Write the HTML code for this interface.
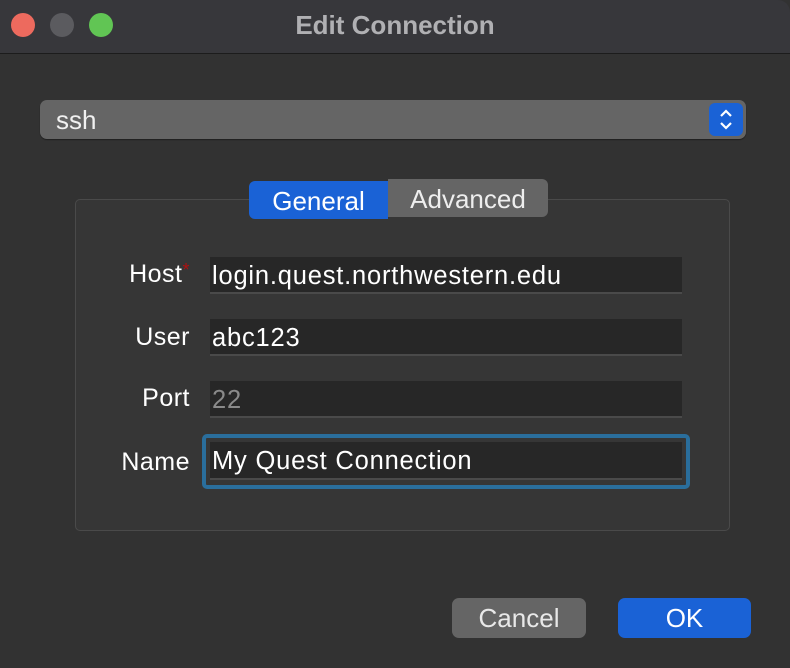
<!DOCTYPE html>
<html><head><style>
*{margin:0;padding:0;box-sizing:border-box}
body{width:790px;height:668px;background:#323232;font-family:"Liberation Sans",sans-serif;position:relative;overflow:hidden;color:#fff}
.a{position:absolute}
.tb{left:0;top:0;width:790px;height:54px;background:#37373b;border-bottom:1px solid #1c1c1c;border-top-right-radius:12px}
.dot{width:24px;height:24px;border-radius:50%;top:13px}
.title{left:0;width:790px;top:10px;text-align:center;font-size:26px;font-weight:bold;color:#b0b0b3}
.pop{left:40px;top:100px;width:706px;height:39px;background:#656565;border-radius:7px;box-shadow:0 1px 1px rgba(0,0,0,.4)}
.step{left:709px;top:103px;width:34px;height:33px;background:#1a62d6;border-radius:6px}
.grp{left:75px;top:199px;width:655px;height:332px;background:#363636;border:1px solid #4a4a4a;border-radius:5px}
.tab{top:181px;height:38px;font-size:26px;text-align:center;line-height:40px}
.lbl{width:190px;left:0;text-align:right;font-size:25px;color:#fff;letter-spacing:.5px}
.fld{left:210px;width:472px;height:37px;background:#272727;border-bottom:2px solid #4a4a4a;font-size:25.5px;letter-spacing:.8px;padding-left:2px;line-height:38px}
.btn{top:598px;height:40px;border-radius:7px;font-size:26px;text-align:center;line-height:40px}
</style></head><body>
<div class="a tb"></div>
<div class="a dot" style="left:11px;background:#ed6a5e"></div>
<div class="a dot" style="left:50px;background:#5b5b5f"></div>
<div class="a dot" style="left:89px;background:#61c554"></div>
<div class="a title">Edit Connection</div>
<div class="a pop"></div>
<div class="a" style="left:56px;top:105px;font-size:26px;color:#f0f0f0">ssh</div>
<div class="a step"><svg width="34" height="33"><path d="M12 13l5-5 5 5M12 20l5 5 5-5" stroke="#fff" stroke-width="2.2" fill="none"/></svg></div>
<div class="a grp"></div>
<div class="a tab" style="left:249px;width:139px;background:#1a62d6;border-radius:6px 0 0 6px;top:181px">General</div>
<div class="a tab" style="left:388px;width:160px;background:#656565;border-radius:0 6px 6px 0;top:179px;color:#eee">Advanced</div>
<div class="a lbl" style="top:260px">Host<span style="color:#b01010;font-size:18px;vertical-align:top">*</span></div>
<div class="a fld" style="top:257px">login.quest.northwestern.edu</div>
<div class="a lbl" style="top:323px">User</div>
<div class="a fld" style="top:319px">abc123</div>
<div class="a lbl" style="top:384px">Port</div>
<div class="a fld" style="top:381px;color:#8a8a8a">22</div>
<div class="a lbl" style="top:448px">Name</div>
<div class="a" style="left:202px;top:434px;width:488px;height:55px;border:4px solid #2a6e9c;border-radius:5px"></div>
<div class="a fld" style="top:442px;height:38px">My Quest Connection</div>
<div class="a btn" style="left:452px;width:134px;background:#656565;color:#e8e8e8">Cancel</div>
<div class="a btn" style="left:618px;width:133px;background:#1a62d6">OK</div>
</body></html>
